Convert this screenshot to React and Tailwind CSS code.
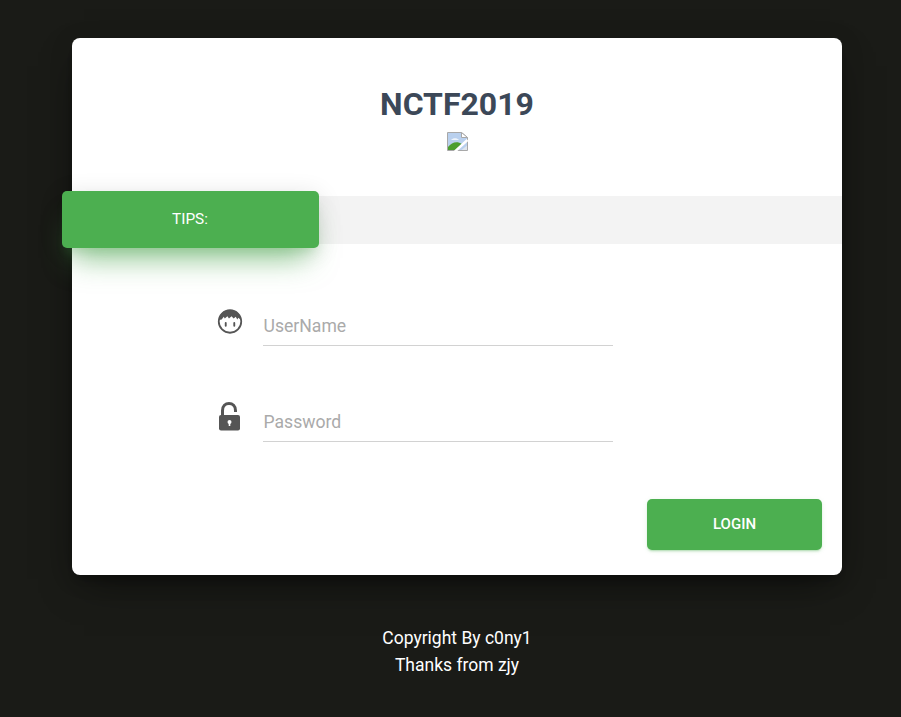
import React from "react";

function BrokenImage() {
  return (
    <svg width="21" height="19" viewBox="0 0 21 19" className="block">
      <path d="M0.5 0.5H14.5L20.5 5.5V18.5H0.5Z" fill="#b9d0ee" stroke="#a8a8a8" />
      <path d="M14.5 0.5V5.5H20.5Z" fill="#fff" stroke="#a8a8a8" />
      <path d="M4 8C6 5.5 10 5.5 12 8Z" fill="#eef4fb" />
      <path d="M1 18V15C5 10 10 9 15 12L8.5 18Z" fill="#4c9e2f" />
      <path d="M8 19.5L20.5 8" stroke="#fff" strokeWidth="2.5" />
      <path d="M14.5 18H20V13.5Z" fill="#dfe6ee" />
    </svg>
  );
}

function FaceIcon() {
  return (
    <svg width="26" height="25" viewBox="0 0 24 24" className="block mt-[3px] ml-[-0.5px]">
      <circle cx="12" cy="12" r="10.8" fill="none" stroke="#555" strokeWidth="1.7" />
      <path d="M1.5 10.5C2 4.5 6.5 1 12 1S22 4.5 22.5 10.5L20 8.5L19 10L17.5 7.5L15.5 9L13.5 7L11 9L9.5 7L7 9L6 7.5L4 10Z" fill="#555" />
      <rect x="7" y="12.5" width="1.8" height="4.5" rx="0.9" fill="#555" />
      <rect x="15.2" y="12.5" width="1.8" height="4.5" rx="0.9" fill="#555" />
    </svg>
  );
}

function LockIcon() {
  return (
    <svg width="24" height="30" viewBox="0 0 24 30" className="block ml-[1px]">
      <path d="M4.5 14V8.5C4.5 4.2 7.4 1.5 11 1.5S17.5 4.2 17.5 8.5V10" fill="none" stroke="#555" strokeWidth="3" />
      <rect x="1" y="13" width="21" height="15.5" rx="2" fill="#555" />
      <circle cx="11.5" cy="20" r="2" fill="#fff" />
      <rect x="10.7" y="20" width="1.6" height="4" fill="#fff" />
    </svg>
  );
}

function Field({ icon, placeholder, type }) {
  return (
    <div className="flex items-start">
      <div className="w-[46px] h-[40px]">{icon}</div>
      <input
        type={type}
        placeholder={placeholder}
        className="w-[350px] h-[40px] pl-[0.5px] border-b border-[#d2d2d2] text-[17.6px] text-[#555] outline-none placeholder:text-[#aaaaaa] placeholder:opacity-100"
      />
    </div>
  );
}

export default function App() {
  return (
    <div className="bg-[#1a1b17] min-h-screen w-screen pt-[38px] font-['Roboto',sans-serif]">
      <div className="relative w-[770px] h-[537px] ml-[72px] bg-white rounded-lg shadow-[0_16px_38px_-12px_rgba(0,0,0,0.56),0_4px_25px_0_rgba(0,0,0,0.12),0_8px_10px_-5px_rgba(0,0,0,0.2)]">
        <h1 className="pt-[47px] text-center text-[32px] leading-[38px] font-bold text-[#3c4858]">
          NCTF2019
        </h1>
        <div className="flex justify-center mt-[9px]">
          <BrokenImage />
        </div>

        <div className="relative h-[48px] mt-[45px] bg-[#f3f3f3]">
          <div className="absolute left-[-10px] top-[-5px] w-[257px] h-[57px] flex items-center justify-center pr-[1px] rounded-[5px] bg-[#4caf50] text-white text-[15.4px] shadow-[0_22px_30px_-12px_rgba(76,175,80,0.6),0_4px_25px_0_rgba(0,0,0,0.12),0_8px_10px_-5px_rgba(76,175,80,0.2)]">
            TIPS:
          </div>
        </div>

        <div className="flex flex-col gap-[56px] mt-[62px] ml-[145px]">
          <Field icon={<FaceIcon />} placeholder="UserName" type="text" />
          <Field icon={<LockIcon />} placeholder="Password" type="password" />
        </div>

        <div className="flex justify-end mt-[57px] pr-[20px]">
          <button className="w-[175px] h-[51px] rounded-[5px] bg-[#4caf50] text-white text-[15px] font-medium shadow-[0_2px_2px_0_rgba(76,175,80,0.14),0_3px_1px_-2px_rgba(76,175,80,0.2),0_1px_5px_0_rgba(76,175,80,0.12)]">
            LOGIN
          </button>
        </div>
      </div>

      <div className="mt-[50px] text-center text-white text-[17.5px] leading-[27px] w-[770px] ml-[72px]">
        <p>Copyright By c0ny1</p>
        <p>Thanks from zjy</p>
      </div>
    </div>
  );
}
